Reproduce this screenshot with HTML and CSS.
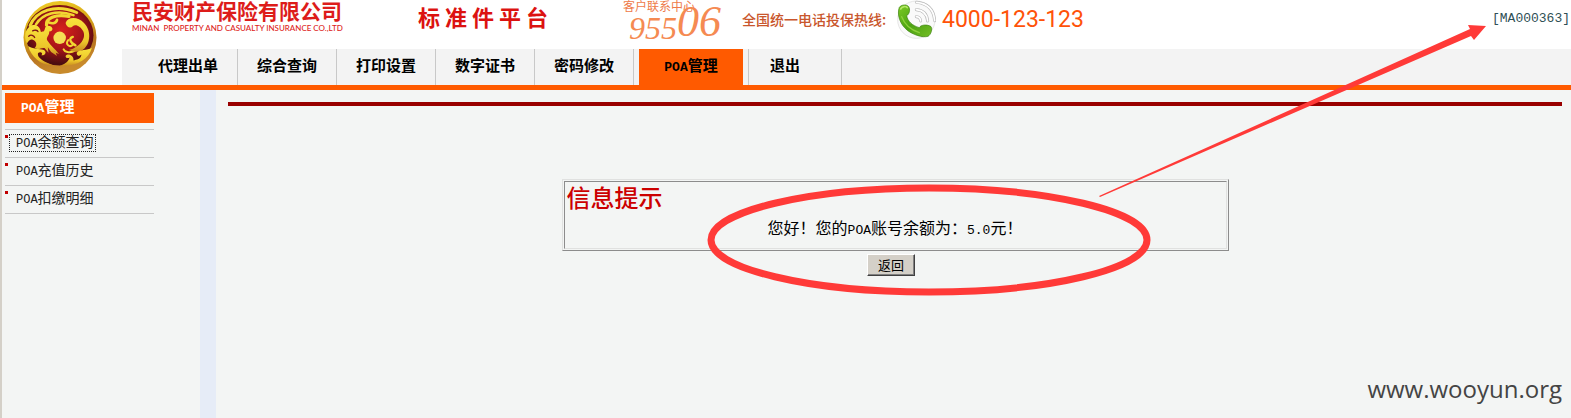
FILE: index.html
```html
<!DOCTYPE html>
<html lang="zh-CN">
<head>
<meta charset="utf-8">
<title>标准件平台</title>
<link rel="stylesheet" href="styles.css">
</head>
<body>
<header class="header">
  <div class="logo">
    <svg class="logo-mark" viewBox="66 -4 230 228" role="img" aria-label="民安保险">
      <defs>
        <linearGradient id="rim" x1="0" y1="0" x2="0.3" y2="1">
          <stop offset="0" stop-color="#f3d32a"/><stop offset="0.45" stop-color="#d9a818"/><stop offset="0.75" stop-color="#b87420"/><stop offset="1" stop-color="#c88a2c"/>
        </linearGradient>
        <radialGradient id="red" cx="0.52" cy="0.42" r="0.55">
          <stop offset="0" stop-color="#d8221c"/><stop offset="0.55" stop-color="#a81418"/><stop offset="1" stop-color="#4c0c10"/>
        </radialGradient>
        <linearGradient id="gold" x1="0" y1="0" x2="0" y2="1">
          <stop offset="0" stop-color="#f8e23c"/><stop offset="0.7" stop-color="#ecc62a"/><stop offset="1" stop-color="#c98a20"/>
        </linearGradient>
      </defs>
      <circle cx="181" cy="110" r="111" fill="url(#rim)"/>
      <ellipse cx="180" cy="103" rx="103" ry="92" fill="url(#red)"/>
      <g fill="none" stroke="#f2d732" stroke-linecap="round">
        <path d="M90 74C108 30 165 6 232 34" stroke-width="9"/>
        <path d="M108 70C128 38 172 24 222 42" stroke-width="8"/>
        <path d="M140 72C138 52 166 38 208 46" stroke-width="10"/>
        <path d="M142 62C154 70 170 68 172 56" stroke-width="8"/>
        <path d="M206 118C196 130 210 142 220 132" stroke-width="6"/>
        <path d="M220 108C206 112 212 126 228 134" stroke-width="7"/>
        <path d="M226 150C210 160 194 152 192 146" stroke-width="6"/>
      </g>
      <g fill="url(#gold)">
        <path d="M198 66C204 46 236 46 254 66C280 92 272 138 246 150C232 156 218 152 208 148C236 142 262 116 252 92C244 74 226 68 220 76C212 84 200 78 198 66Z"/>
        <path d="M76 96C84 72 104 66 116 78C126 88 118 96 128 92C138 92 132 74 144 74C160 74 164 90 148 92C150 104 138 108 142 118C154 136 166 144 178 160L168 156L172 166L154 154L144 140L146 156L134 142C122 140 118 150 104 142C114 132 108 118 96 116C88 114 84 124 80 128C74 116 74 104 76 96Z"/>
        <path d="M84 136C98 146 118 144 132 148C142 154 136 166 124 164C132 158 120 150 114 158C110 172 136 186 160 194C124 196 94 170 84 136Z"/>
        <path d="M278 142C264 150 240 146 232 156C230 166 242 168 246 162C246 176 230 178 222 180C224 166 206 156 198 166C198 174 208 174 210 170C208 186 190 192 180 196C232 200 268 176 278 142Z"/>
      </g>
      <path d="M98 90C104 86 112 88 114 92M86 106C92 100 102 104 104 110" fill="none" stroke="#7c1214" stroke-width="4" stroke-linecap="round"/>
      <circle cx="180" cy="111" r="19" fill="#f5df55"/>
    </svg>
  </div>
  <div class="header-main">
    <div class="brand">
      <div class="company">
        <div class="company-cn">民安财产保险有限公司</div>
        <div class="company-en">MINAN &nbsp;PROPERTY AND CASUALTY INSURANCE CO.,LTD</div>
      </div>
      <h1 class="platform">标 准 件 平 台</h1>
      <div class="contact">
        <div class="contact-label">客户联系中心</div>
        <div class="contact-number">955<span class="contact-big">06</span></div>
      </div>
      <div class="hotline">全国统一电话投保热线:</div>
      <svg class="phone" viewBox="0 0 120 120" aria-hidden="true">
        <defs>
          <linearGradient id="green" x1="0" y1="0" x2="1" y2="1">
            <stop offset="0" stop-color="#7ccb24"/><stop offset="0.5" stop-color="#4da312"/><stop offset="1" stop-color="#73bd25"/>
          </linearGradient>
        </defs>
        <circle cx="61" cy="59" r="56" fill="#fafafa" stroke="#e6e6e6" stroke-width="3"/>
        <g fill="none" stroke-linecap="round">
          <path d="M61 50Q73 51 74 63M61 29Q92 31 95 63M62 7Q112 12 116 62" stroke="#b9b9b9" stroke-width="9"/>
          <path d="M61 50Q73 51 74 63M61 29Q92 31 95 63M62 7Q112 12 116 62" stroke="#fff" stroke-width="5"/>
        </g>
        <path d="M10 22C16 13 33 13 38 20C43 28 41 42 32 47C35 64 49 77 70 83C73 75 91 72 104 79C111 86 105 104 96 109C80 114 50 104 33 90C12 73 2 43 10 22Z" fill="url(#green)" stroke="#397f0c" stroke-width="2"/>
        <path d="M14 27C19 18 30 18 34 23" fill="none" stroke="#b4e767" stroke-width="5" stroke-linecap="round"/>
        <path d="M17 50C26 74 43 89 70 98" fill="none" stroke="#8ed03c" stroke-width="4" stroke-linecap="round"/>
      </svg>
      <div class="phone-number">4000-123-123</div>
      <div class="user">[MA000363]</div>
    </div>
    <nav class="nav">
      <a class="tab tab-first" href="#">代理出单</a>
      <a class="tab" href="#">综合查询</a>
      <a class="tab" href="#">打印设置</a>
      <a class="tab" href="#">数字证书</a>
      <a class="tab" href="#">密码修改</a>
      <a class="tab tab-active" href="#" aria-current="page"><span class="latin">POA</span>管理</a>
      <a class="tab tab-exit" href="#">退出</a>
    </nav>
  </div>
</header>
<div class="page">
  <aside class="sidebar">
    <h2 class="side-title"><span class="latin">POA</span>管理</h2>
    <ul class="side-list">
      <li class="side-item"><a class="side-link side-focus" href="#"><span class="latin">POA</span>余额查询</a></li>
      <li class="side-item"><a class="side-link" href="#"><span class="latin">POA</span>充值历史</a></li>
      <li class="side-item"><a class="side-link" href="#"><span class="latin">POA</span>扣缴明细</a></li>
    </ul>
  </aside>
  <div class="divider"></div>
  <main class="main">
    <hr class="rule">
    <section class="notice">
      <div class="notice-body">
        <h2 class="notice-title">信息提示</h2>
        <p class="notice-text">您好&#xFF01;您的<span class="latin">POA</span>账号余额为&#xFF1A;<span class="latin">5.0</span>元&#xFF01;</p>
      </div>
    </section>
    <div class="actions"><button class="back" type="button">返回</button></div>
  </main>
</div>
<svg class="marks" width="1500" height="310" aria-hidden="true">
  <ellipse cx="929" cy="240" rx="218" ry="52" fill="none" stroke="#ff3a38" stroke-width="7"/>
  <path d="M1099 196L1470 29L1468 25L1486 26L1474 40L1471 36L1100 197Z" fill="#ff3a38"/>
</svg>
<div class="watermark">www.wooyun.org</div>
</body>
</html>
```
FILE: styles.css
```css
* { box-sizing: border-box; }

body {
  margin: 0;
  min-height: 100vh;
  display: flex;
  flex-direction: column;
  position: relative;
  border-left: 2px solid #d4d0c8;
  background: #f3f5f4;
  color: #000;
  font: 14px/20px "Noto Sans CJK SC", sans-serif;
}

h1, h2, p, ul { margin: 0; padding: 0; }
a { color: inherit; text-decoration: none; }

.latin { font-family: "Liberation Mono", monospace; font-size: 12px; }

.header {
  display: flex;
  background: #fff;
  border-bottom: 5px solid #ff5a00;
}
.logo { width: 120px; padding-left: 20px; }
.logo-mark { display: block; width: 76px; height: 75px; }
.header-main { flex: 1; }

.brand {
  height: 49px;
  padding-left: 10px;
  display: grid;
  grid-template-columns: 286px 205px 119px 154px 46px 1fr auto;
  align-items: start;
  white-space: nowrap;
}
.company { color: #dd1c1a; }
.company-cn { font-size: 21px; font-weight: 700; line-height: 21px; }
.company-en { font: 8px/12px Lato, sans-serif; font-weight: 500; margin-top: 1px; }
.platform { color: #dc1210; font-size: 22px; line-height: 32px; font-weight: 700; }
.contact { color: #f58a52; }
.contact-label { font-size: 12px; line-height: 12px; color: #ee7a48; }
.contact-number {
  height: 28px;
  font: italic 32px/28px "Liberation Serif", serif;
  padding-left: 6px;
}
.contact-big { font-size: 44px; line-height: 20px; vertical-align: 3px; }
.hotline { color: #c9562c; font-size: 14px; line-height: 38px; font-weight: 500; }
.phone { display: block; width: 40px; height: 40px; }
.phone-number { color: #ff5208; font: 23px/40px Roboto, sans-serif; }
.user { color: #2f4f55; font: 13px/38px "Liberation Mono", monospace; padding-right: 1px; }

.nav {
  display: flex;
  height: 36px;
  background: #f3f3f3;
  font-size: 15px;
  line-height: 32px;
  font-weight: 700;
}
.tab { width: 99px; text-align: center; border-right: 1px solid #c8c8c8; }
.tab-first { width: 116px; padding-left: 17px; }
.tab-active { width: 104px; margin: 0 5px; border: 0; background: #ff5a00; }
.tab-exit { width: 94px; padding-left: 21px; text-align: left; border-left: 1px solid #c8c8c8; }
.tab-active .latin, .side-title .latin { font-size: 13px; }

.page { flex: 1; display: flex; }
.sidebar { width: 198px; padding: 3px 46px 0 3px; color: #222; }
.side-title {
  height: 30px;
  padding-left: 16px;
  background: #ff5a00;
  color: #fff;
  font-size: 15px;
  line-height: 26px;
}
.side-list { list-style: none; margin-top: 6px; border-bottom: 1px solid #c8c8c8; }
.side-item {
  height: 28px;
  display: flex;
  align-items: flex-start;
  padding-top: 4px;
  border-top: 1px solid #c8c8c8;
}
.side-item::before { content: ""; width: 3px; height: 3px; margin: 1px 1px 0 0; background: #c00000; }
.side-link { height: 18px; line-height: 12px; padding: 0 1px 0 6px; border: 1px solid transparent; }
.side-focus { border: 1px dotted #222; }

.divider { width: 16px; background: #e6ecf7; }
.main { flex: 1; padding: 12px 9px 0 12px; }
.rule { height: 4px; margin: 0; border: 0; background: #990000; }
.notice {
  width: 50%;
  margin: 73px auto 0;
  padding: 1px;
  border: 1px solid;
  border-color: #e0e1e0 #8c8c8c #8c8c8c #e0e1e0;
}
.notice-body {
  height: 68px;
  padding: 0 2px;
  border: 1px solid;
  border-color: #8c8c8c #e0e1e0 #e0e1e0 #8c8c8c;
}
.notice-title { color: #cc0000; font-size: 24px; line-height: 30px; font-weight: 500; }
.notice-text { font-size: 16px; line-height: 30px; text-align: center; }
.notice-text .latin { font-size: 13px; }
.actions { display: flex; justify-content: center; padding: 3px 8px 0 0; }
.back {
  width: 48px;
  height: 22px;
  padding: 0;
  border: 1px solid;
  border-color: #fff #404040 #404040 #fff;
  box-shadow: inset -1px -1px #808080;
  background: #d4d0c8;
  color: #000;
  font: 13px/18px "Noto Sans CJK SC", sans-serif;
}

.marks { position: absolute; left: -2px; top: 0; pointer-events: none; }
.watermark {
  position: absolute;
  right: 9px;
  bottom: 11px;
  color: #444;
  font: 24px/36px "Open Sans", sans-serif;
}
```
